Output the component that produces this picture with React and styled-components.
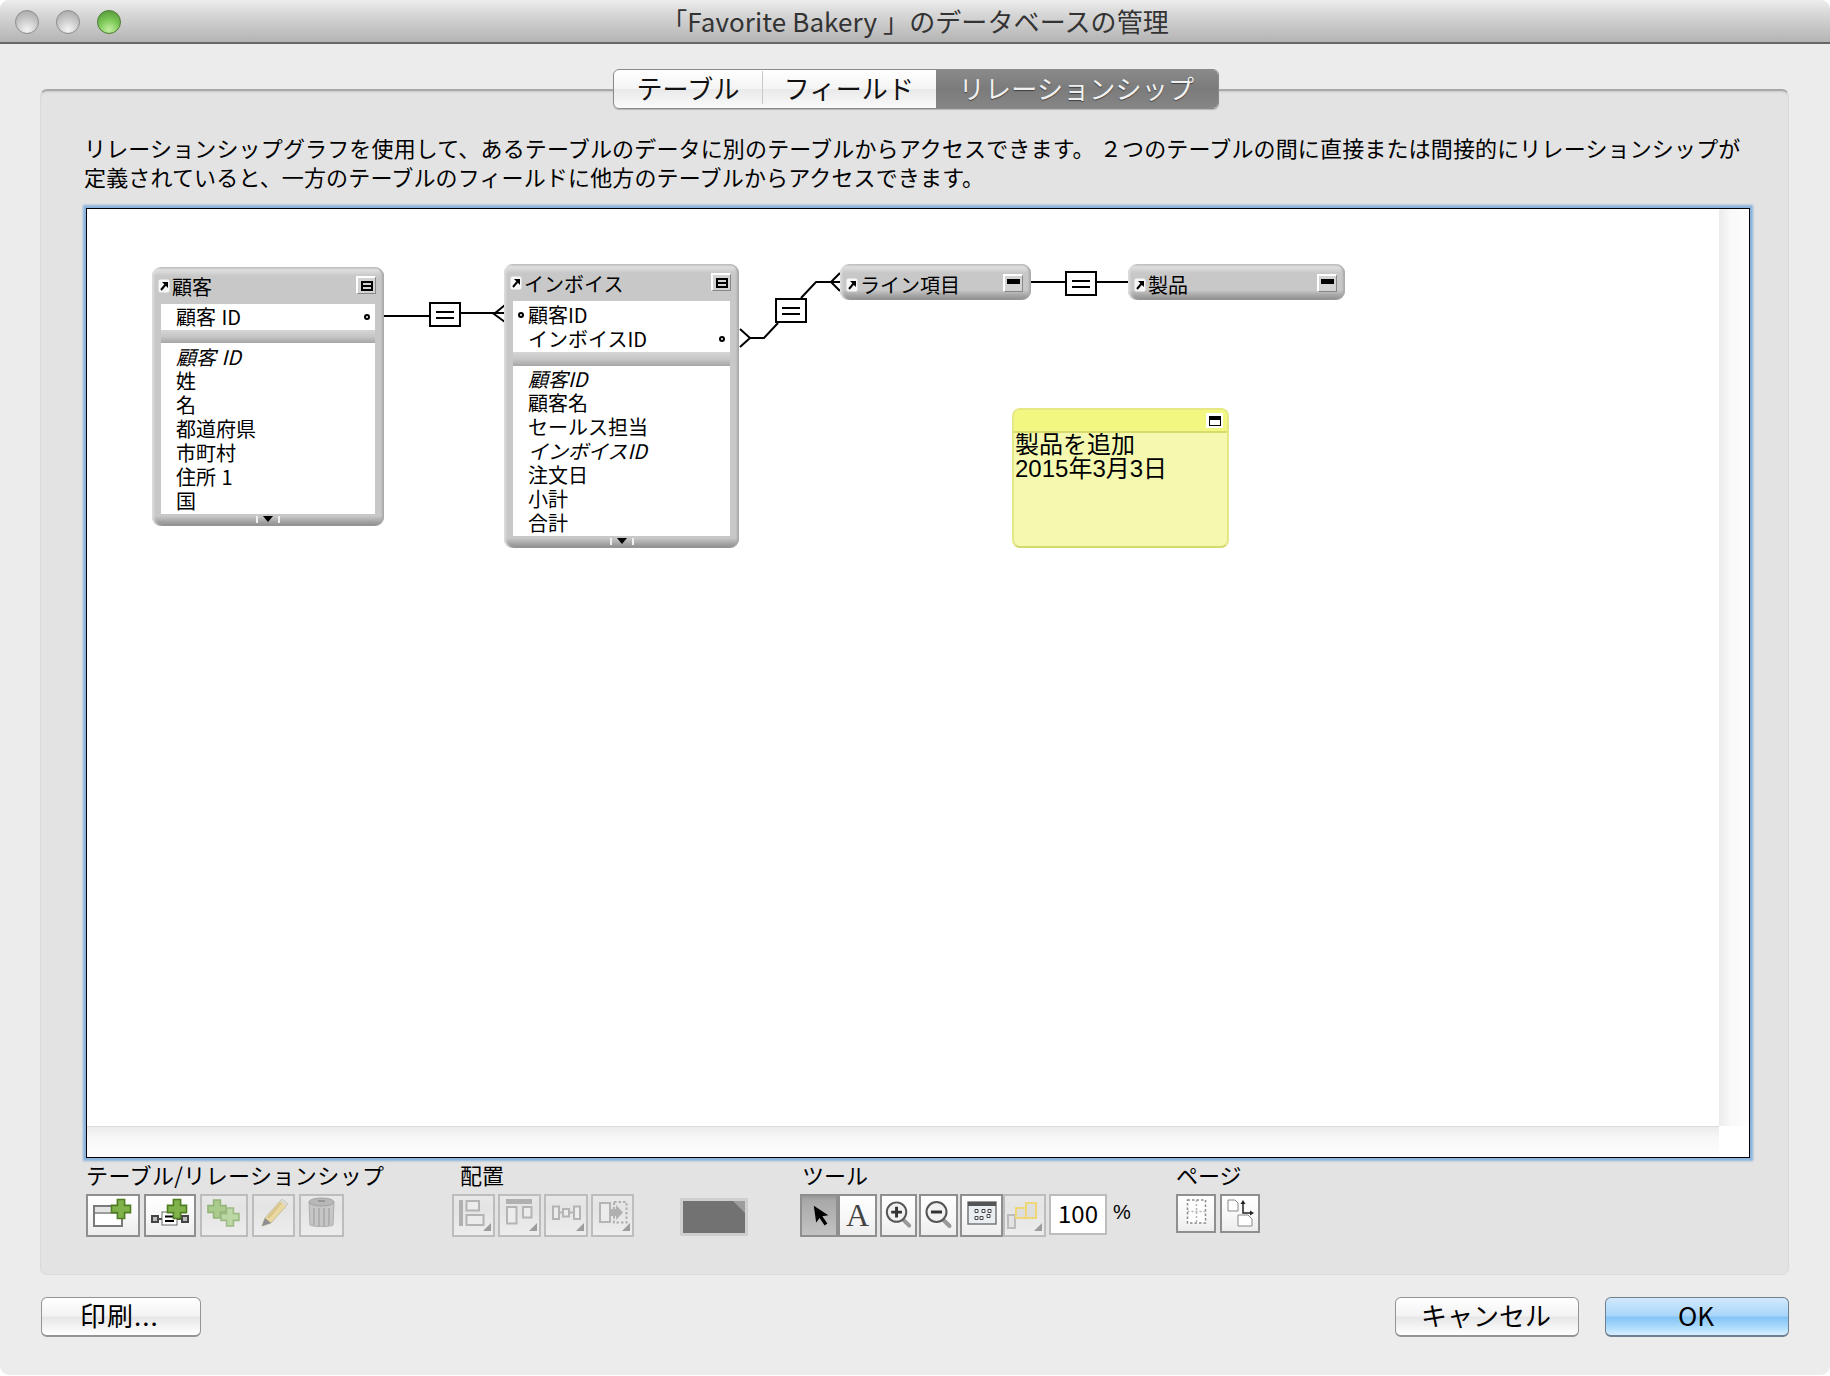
import React from 'react';
import styled, { createGlobalStyle } from 'styled-components';

const UI_FONT = '"Noto Sans CJK JP", "Noto Sans", sans-serif';

const GlobalStyle = createGlobalStyle`
  html, body {
    margin: 0;
    padding: 0;
    background: #fff;
  }
  * {
    box-sizing: border-box;
  }
`;

/* WINDOW */
const Window = styled.div`
  width: 1830px;
  height: 1375px;
  background: #ececec;
  border-radius: 9px;
  overflow: hidden;
  font-family: ${UI_FONT};
  color: #000;
`;

const TitleBar = styled.div`
  position: relative;
  height: 44px;
  display: flex;
  align-items: center;
  justify-content: center;
  background: linear-gradient(#ededed, #d6d6d6 35%, #b4b4b4);
  border-bottom: 2px solid #676767;
`;

const TrafficLights = styled.div`
  position: absolute;
  left: 15px;
  top: 10px;
  display: flex;
  gap: 17px;
`;

const Light = styled.span`
  width: 24px;
  height: 24px;
  border-radius: 50%;
  border: 1px solid ${(p) => (p.$on ? '#4e7d33' : '#8d8d8d')};
  background: ${(p) =>
    p.$on
      ? 'radial-gradient(circle at 50% 85%, #c4efa2 0, #7fca5a 45%, #4c8f33 100%)'
      : 'radial-gradient(circle at 50% 85%, #f4f4f4 0, #c9c9c9 50%, #a2a2a2 100%)'};
`;

const Title = styled.div`
  font-size: 26px;
  letter-spacing: 0.1px;
  color: #333;
  white-space: nowrap;
  padding-bottom: 1px;
`;

const Body = styled.div`
  padding: 0 41px 0 40px;
`;

const TabRow = styled.div`
  position: relative;
  z-index: 1;
  display: flex;
  justify-content: center;
  margin-top: 25px;
  height: 40px;
  padding-left: 2px;
`;

const Tabs = styled.div`
  display: flex;
  height: 40px;
  border-radius: 6px;
  border: 1px solid #8b8b8b;
  overflow: hidden;
  background: linear-gradient(#fff, #f4f4f4 50%, #e9e9e9 50%, #fafafa);
  box-shadow: 0 1px 1px rgba(0, 0, 0, 0.2);
`;

const Tab = styled.div`
  position: relative;
  width: ${(p) => p.$w}px;
  height: 100%;
  display: flex;
  align-items: center;
  justify-content: center;
  font-size: 26px;
  letter-spacing: 0.2px;
  padding-bottom: 3px;
  color: ${(p) => (p.$active ? '#f1f1f1' : '#111')};
  background: ${(p) =>
    p.$active ? 'linear-gradient(#8a8a8a, #7b7b7b 50%, #868686)' : 'none'};
  text-shadow: ${(p) => (p.$active ? '0 1px 1px rgba(0,0,0,.5)' : 'none')};
  &::after {
    content: '';
    display: ${(p) => (p.$divider ? 'block' : 'none')};
    position: absolute;
    right: 0;
    top: 1px;
    bottom: 4px;
    width: 1px;
    background: #c8c8c8;
  }
`;

const Panel = styled.div`
  margin-top: -20px;
  height: 1186px;
  padding: 42px 39px 0 45px;
  background: #e3e3e3;
  border-radius: 7px;
  border: 1px solid #dadada;
  border-top: 2px solid #a8a8a8;
  box-shadow: inset 0 2px 2px -1px #c9c9c9;
`;

const Description = styled.p`
  margin: 0 0 17px -2px;
  font-size: 22px;
  line-height: 29px;
  height: 58px;
  white-space: nowrap;
  letter-spacing: 0.15px;
`;

/* GRAPH */
const Canvas = styled.div`
  width: 1664px;
  height: 950px;
  display: grid;
  grid-template-columns: 1fr 30px;
  grid-template-rows: 1fr 31px;
  background: #fff;
  border: 1px solid #000;
  box-shadow: 0 0 2px 3px #8ab3de;
`;

const Graph = styled.div`
  position: relative;
  overflow: hidden;
  background: #fff;
`;

const VTrack = styled.div`
  background: linear-gradient(90deg, #ececec, #f9f9f9 40%, #fdfdfd);
`;

const HTrack = styled.div`
  background: linear-gradient(#ececec, #f8f8f8 40%, #fdfdfd);
  border-top: 1px solid #dcdcdc;
`;

const ScrollCorner = styled.div`
  background: #fff;
`;

const Connectors = styled.svg`
  position: absolute;
  left: 0;
  top: 0;
  width: 100%;
  height: 100%;
`;

const TableNode = styled.div`
  position: absolute;
  left: ${(p) => p.$x}px;
  top: ${(p) => p.$y}px;
  width: ${(p) => p.$w}px;
  height: ${(p) => p.$h}px;
  display: flex;
  flex-direction: column;
  padding: 0 9px;
  border-radius: 9px;
  background: linear-gradient(#b9b9b9, #dfdfdf 3px, #c8c8c8 9px, #c8c8c8 calc(100% - 10px), #a8a8a8 calc(100% - 5px), #8c8c8c);
  box-shadow: inset 3px 0 2px -1px #dddddd, inset -3px 0 2px -1px #aaaaaa;
`;

const NodeHeader = styled.div`
  position: relative;
  height: ${(p) => (p.$collapsed ? 36 : 37)}px;
  flex: none;
  display: flex;
  align-items: center;
  font-size: 20px;
  padding-top: ${(p) => (p.$collapsed ? 5 : 1)}px;
  margin-left: -3px;
  white-space: nowrap;
`;

const LinkMark = styled.svg`
  width: 12px;
  height: 14px;
  flex: none;
  margin-right: 2px;
`;

const CollapseButton = styled.span`
  position: absolute;
  right: -1px;
  top: ${(p) => (p.$collapsed ? 10 : 9)}px;
  width: 20px;
  height: 18px;
  display: flex;
  justify-content: center;
  align-items: ${(p) => (p.$collapsed ? 'flex-start' : 'center')};
  padding-top: ${(p) => (p.$collapsed ? 3 : 0)}px;
  background: #d3d3d3;
  border-top: 2px solid #fff;
  border-left: 2px solid #fff;
  border-bottom: 1px solid #888;
  border-right: 1px solid #888;
`;

const BoxGlyph = styled.span`
  position: relative;
  width: 12px;
  height: 10px;
  border: 2px solid #000;
  &::after {
    content: '';
    position: absolute;
    left: 0;
    right: 0;
    top: 2px;
    height: 2px;
    background: #000;
  }
`;

const BarGlyph = styled.span`
  width: 13px;
  height: 5px;
  background: #000;
`;

const FieldList = styled.div`
  position: relative;
  height: ${(p) => p.$h}px;
  flex: none;
  padding-top: ${(p) => p.$pad}px;
  background: #fff;
`;

const Divider = styled.div`
  flex: none;
  height: ${(p) => p.$h}px;
  background: linear-gradient(#d6d6d6, #c6c6c6 50%, #a6a6a6);
`;

const FieldRow = styled.div`
  position: relative;
  height: 24px;
  line-height: 24px;
  padding-left: 15px;
  font-size: 20px;
  word-spacing: 1px;
  white-space: nowrap;
  font-style: ${(p) => (p.$italic ? 'italic' : 'normal')};
`;

const KeyDot = styled.span`
  position: absolute;
  top: 9px;
  ${(p) => (p.$left ? 'left: 5px;' : 'right: 5px;')}
  width: 6px;
  height: 6px;
  border: 2px solid #000;
  border-radius: 50%;
  background: #fff;
`;

const NodeFooter = styled.div`
  flex: 1;
  display: flex;
  justify-content: center;
  padding-top: 2px;
`;

const ExpandHandle = styled.span`
  position: relative;
  width: 24px;
  height: 7px;
  border-left: 2px solid #f0f0f0;
  border-right: 2px solid #f0f0f0;
  &::after {
    content: '';
    position: absolute;
    left: 5px;
    top: 0;
    border-left: 5px solid transparent;
    border-right: 5px solid transparent;
    border-top: 6px solid #000;
  }
`;

const RelationBox = styled.div`
  position: absolute;
  left: ${(p) => p.$x}px;
  top: ${(p) => p.$y}px;
  width: 32px;
  height: 25px;
  display: flex;
  align-items: center;
  justify-content: center;
  background: #fff;
  border: 2px solid #000;
`;

const EqualSign = styled.span`
  width: 18px;
  height: 8px;
  border-top: 2px solid #000;
  border-bottom: 2px solid #000;
`;

const Note = styled.div`
  position: absolute;
  left: 925px;
  top: 199px;
  width: 217px;
  height: 140px;
  border-radius: 8px;
  border: 2px solid #e5e884;
  border-bottom-color: #d6da6c;
  background: #f5f9b0;
  overflow: hidden;
`;

const NoteHeader = styled.div`
  position: relative;
  height: 23px;
  background: #f1f781;
  border-bottom: 2px solid #d7db6e;
`;

const NoteClose = styled.span`
  position: absolute;
  right: 4px;
  top: 3px;
  width: 17px;
  height: 15px;
  display: flex;
  align-items: center;
  justify-content: center;
  background: #fff;
`;

const NoteGlyph = styled.span`
  width: 12px;
  height: 10px;
  border: 1.5px solid #000;
  border-top-width: 4px;
`;

const NoteText = styled.div`
  padding-left: 1px;
  font-family: "Liberation Sans", "Noto Sans CJK JP", sans-serif;
  font-size: 24px;
  line-height: 24px;
`;

/* TOOLBAR */
const Toolbar = styled.div`
  display: grid;
  grid-template-columns: 366px 228px 120px 376px auto;
  padding-top: 4px;
`;

const ToolGroup = styled.div`
  display: flex;
  flex-direction: column;
`;

const GroupLabel = styled.div`
  height: 32px;
  line-height: 24px;
  font-size: 22px;
  white-space: nowrap;
  padding-left: ${(p) => p.$indent || 0}px;
  letter-spacing: ${(p) => p.$tracking || 0}px;
`;

const ButtonRow = styled.div`
  display: flex;
  align-items: flex-start;
`;

const ToolButton = styled.div`
  flex: none;
  width: ${(p) => p.$w}px;
  height: ${(p) => p.$h || 43}px;
  margin-left: ${(p) => p.$ml || 0}px;
  display: flex;
  align-items: center;
  justify-content: center;
  color: #444;
  font-family: "Liberation Serif", serif;
  font-size: 32px;
  background: ${(p) =>
    p.$active
      ? 'linear-gradient(#8f8f8f, #a8a8a8 6px, #c4c4c4)'
      : p.$disabled
        ? 'linear-gradient(#e9e9e9, #e4e4e4 30%, #ededed)'
        : 'linear-gradient(#fff, #f8f8f8 50%, #ececec)'};
  box-shadow: inset 0 0 0 2px ${(p) => (p.$disabled ? '#bdbdbd' : '#8f8f8f')};
  svg {
    display: block;
    width: 100%;
    height: 100%;
  }
`;

const ZoomField = styled.div`
  flex: none;
  width: 58px;
  height: 41px;
  margin-left: 3px;
  display: flex;
  align-items: center;
  justify-content: center;
  padding-bottom: 4px;
  background: #fff;
  box-shadow: inset 0 0 0 2px #bcbcbc;
  font-size: 24px;
`;

const Percent = styled.span`
  margin-left: 6px;
  font-family: "Liberation Sans", sans-serif;
  font-size: 20px;
  line-height: 36px;
`;

const Swatch = styled.div`
  position: relative;
  width: 68px;
  height: 38px;
  margin-top: 36px;
  border: 3px solid #cfcfcf;
  background: #727272;
  &::after {
    content: '';
    position: absolute;
    right: 0;
    top: 0;
    border-left: 12px solid transparent;
    border-top: 12px solid #9d9d9d;
  }
`;

/* FOOTER */
const Footer = styled.div`
  display: flex;
  justify-content: space-between;
  margin-top: 22px;
  padding-left: 1px;
`;

const DialogButton = styled.div`
  width: ${(p) => p.$w}px;
  height: 40px;
  display: flex;
  align-items: center;
  justify-content: ${(p) => (p.$left ? 'flex-start' : 'center')};
  padding-left: ${(p) => (p.$left ? 38 : 0)}px;
  padding-right: ${(p) => (p.$left ? 0 : 2)}px;
  padding-bottom: 4px;
  font-size: 26px;
  letter-spacing: ${(p) => (p.$left ? 1 : 0)}px;
  border-radius: 6px;
  border: 1px solid ${(p) => (p.$primary ? '#6e7f90' : '#949494')};
  border-bottom-width: 2px;
  background: ${(p) =>
    p.$primary
      ? 'linear-gradient(#d2e9fc, #a9d5f9 48%, #84c4f6 52%, #a5d8fb 75%, #d4effe)'
      : 'linear-gradient(#fff, #f3f3f3 48%, #e6e6e6 52%, #f5f5f5 80%, #fff)'};
`;

const FooterRight = styled.div`
  display: flex;
  gap: 26px;
`;

/* ICONS */
const ORIGIN = { x: 87, y: 209 };

const Plus = ({ cx, cy, size = 10, arm = 4.5, fill = '#7fb24a', stroke = '#4f7d22' }) => (
  <path
    d={`M${cx - arm} ${cy - size}h${arm * 2}v${size - arm}h${size - arm}v${arm * 2}h-${size - arm}v${size - arm}h-${arm * 2}v-${size - arm}h-${size - arm}v-${arm * 2}h${size - arm}z`}
    fill={fill}
    stroke={stroke}
    strokeWidth="1.6"
  />
);

const NewTableIcon = () => (
  <svg viewBox="0 0 54 43">
    <rect x="8" y="12" width="28" height="20" fill="#fff" stroke="#7a7a7a" strokeWidth="2" />
    <rect x="9" y="13" width="26" height="5" fill="#e4e4e4" />
    <path d="M8 19h28" stroke="#7a7a7a" strokeWidth="1.5" />
    <Plus cx={35} cy={15} size={9.5} arm={3.6} />
  </svg>
);

const NewRelationIcon = () => (
  <svg viewBox="0 0 52 43">
    <path d="M12 25h28" stroke="#111" strokeWidth="1.5" />
    <rect x="8" y="22" width="6" height="6" fill="#bbb" stroke="#444" strokeWidth="2" />
    <rect x="38" y="22" width="6" height="6" fill="#bbb" stroke="#444" strokeWidth="2" />
    <rect x="18" y="18" width="15" height="13" fill="#fff" stroke="#666" />
    <path d="M21 22.5h9M21 27h9" stroke="#000" strokeWidth="2" />
    <Plus cx={33} cy={15} size={9.5} arm={3.6} />
  </svg>
);

const DuplicateIcon = () => (
  <svg viewBox="0 0 48 43">
    <Plus cx={17} cy={15} size={9} arm={3.4} fill="#a9cb8e" stroke="#93b578" />
    <Plus cx={30} cy={23} size={9} arm={3.4} fill="#bcd9a5" stroke="#9dbb84" />
  </svg>
);

const PencilIcon = () => (
  <svg viewBox="0 0 43 43">
    <path d="M13 24l17-19 6 5-17 19-9 3z" fill="#e9d9a0" stroke="#c4bda0" />
    <path d="M28 7l6 5 2-2-6-5z" fill="#d8d8d8" />
    <path d="M10 32l3-8 6 5z" fill="#8e8e8e" />
    <path d="M16 24l13-15" stroke="#d9c488" strokeWidth="2" />
  </svg>
);

const TrashIcon = () => (
  <svg viewBox="0 0 45 43">
    <path d="M10 8l1 23c3 2 20 2 23 0l1-23z" fill="#c6c6c6" stroke="#acacac" />
    <ellipse cx="22.5" cy="8" rx="12.5" ry="4" fill="#b8b8b8" stroke="#a4a4a4" />
    <path d="M19 7h7" stroke="#8d8d8d" strokeWidth="1.5" />
    <path d="M15 14v17M20 14v18M25 14v18M30 14v17" stroke="#a8a8a8" strokeWidth="1.5" />
  </svg>
);

const Corner = ({ w = 43 }) => <path d={`M${w - 4} 29v8h-8z`} fill="#9d9d9d" />;

const AlignLeftIcon = () => (
  <svg viewBox="0 0 43 43">
    <rect x="7" y="6" width="4" height="26" fill="#b0b0b0" />
    <rect x="14.5" y="7" width="12.5" height="9.5" fill="#ececec" stroke="#b4b4b4" strokeWidth="2" />
    <rect x="14.5" y="21" width="17" height="10" fill="#ececec" stroke="#b4b4b4" strokeWidth="2" />
    <Corner />
  </svg>
);

const AlignTopIcon = () => (
  <svg viewBox="0 0 43 43">
    <rect x="8" y="5" width="26" height="5" fill="#b0b0b0" />
    <rect x="9" y="13" width="9.5" height="16.5" fill="#ececec" stroke="#b4b4b4" strokeWidth="2" />
    <rect x="25" y="13" width="8.5" height="10.5" fill="#ececec" stroke="#b4b4b4" strokeWidth="2" />
    <Corner />
  </svg>
);

const DistributeIcon = () => (
  <svg viewBox="0 0 44 43">
    <path d="M14 18.5h16" stroke="#b4b4b4" strokeWidth="2" />
    <rect x="9" y="12.5" width="6" height="12.5" fill="#ececec" stroke="#b4b4b4" strokeWidth="2" />
    <rect x="19" y="15" width="6" height="7.5" fill="#ececec" stroke="#b4b4b4" strokeWidth="2" />
    <rect x="30" y="12.5" width="6" height="12.5" fill="#ececec" stroke="#b4b4b4" strokeWidth="2" />
    <Corner w={44} />
  </svg>
);

const ResizeIcon = () => (
  <svg viewBox="0 0 43 43">
    <rect x="23" y="8" width="12.5" height="20.5" fill="none" stroke="#b0b0b0" strokeWidth="2" strokeDasharray="2.5 2" />
    <rect x="9" y="9" width="10" height="19" fill="#ececec" stroke="#b4b4b4" strokeWidth="2" />
    <path d="M19 15h6v-4l7 7.5-7 7.5v-4h-6z" fill="#b0b0b0" />
    <Corner />
  </svg>
);

const PointerIcon = () => (
  <svg viewBox="0 0 38 43">
    <path d="M15 11v17l4-4 4 8 3-1.5-4-8h6z" fill="#000" transform="rotate(-8 20 20)" />
  </svg>
);

const ZoomIcon = ({ minus }) => (
  <svg viewBox="0 0 38 43">
    <path d="M23 25l7 7" stroke="#999" strokeWidth="4" strokeLinecap="round" />
    <circle cx="17" cy="18" r="10" fill="#f1f1f1" stroke="#555" strokeWidth="2" />
    <path d={minus ? 'M11.5 18h11' : 'M11.5 18h11M17 12.5v11'} stroke="#333" strokeWidth="3" />
  </svg>
);

const ModeIcon = () => (
  <svg viewBox="0 0 43 43">
    <rect x="8" y="8" width="28" height="22" fill="#e9eef3" stroke="#777" strokeWidth="1.5" />
    <rect x="8" y="8" width="28" height="4" fill="#555" />
    <path d="M15 15.5h3v3h-3zM22 15.5h3v3h-3zM28 15.5h3v3h-3zM15 22.5h3v3h-3zM20 22.5h3v3h-3zM27 20.5h3v3h-3z" fill="#fff" stroke="#444" />
  </svg>
);

const ArrangeIcon = () => (
  <svg viewBox="0 0 43 43">
    <rect x="5" y="21" width="7" height="13" fill="#e3e3e3" stroke="#bcbcbc" strokeWidth="2" />
    <rect x="13" y="14" width="10" height="10" fill="#dedede" stroke="#efd777" strokeWidth="2" />
    <rect x="23" y="9" width="10" height="15" fill="#dedede" stroke="#efd777" strokeWidth="2" />
    <Corner />
  </svg>
);

const PageGridIcon = () => (
  <svg viewBox="0 0 40 39">
    <rect x="11.5" y="6" width="18" height="23" fill="#fff" stroke="#8b8b8b" strokeWidth="1.5" strokeDasharray="2.5 2" />
    <path d="M20.5 6v23M11.5 17.5h18" stroke="#b4b4b4" strokeWidth="1.5" strokeDasharray="2 2" />
  </svg>
);

const PageSetupIcon = () => (
  <svg viewBox="0 0 40 39">
    <path d="M8 6h7l3 3v8H8z" fill="#fff" stroke="#888" />
    <path d="M18 21h10l4 4v7H18z" fill="#fff" stroke="#888" />
    <path d="M23 10v9h8" fill="none" stroke="#222" strokeWidth="1.5" />
    <path d="M23 6l-2.5 4h5zM34 19l-4-2.5v5z" fill="#222" />
  </svg>
);

const LinkIcon = () => (
  <LinkMark viewBox="0 0 12 14">
    <rect x="0.5" y="0.5" width="11" height="13" rx="2" fill="#fff" opacity="0.85" />
    <path d="M3 11l5-6" stroke="#000" strokeWidth="2" />
    <path d="M4 3h6v6z" fill="#000" />
  </LinkMark>
);

/* DATA */
const customerFields = ['顧客 ID', '姓', '名', '都道府県', '市町村', '住所 1', '国'];
const invoiceFields = ['顧客ID', '顧客名', 'セールス担当', 'インボイスID', '注文日', '小計', '合計'];

const toLocal = (points) =>
  points.map(([x, y]) => `${x - ORIGIN.x},${y - ORIGIN.y}`).join(' ');

const connectorLines = [
  [[383, 316], [429, 316]],
  [[461, 313], [505, 313]],
  [[505, 305], [494, 314], [505, 322]],
  [[740, 329], [750, 338], [740, 347]],
  [[750, 338], [764, 338], [778, 323]],
  [[801, 298], [816, 282], [840, 282]],
  [[840, 273], [831, 282], [840, 291]],
  [[1031, 282], [1065, 282]],
  [[1097, 282], [1129, 282]],
];

const NodeTitle = ({ name, collapsed }) => (
  <NodeHeader $collapsed={collapsed}>
    <LinkIcon />
    {name}
    <CollapseButton $collapsed={collapsed}>
      {collapsed ? <BarGlyph /> : <BoxGlyph />}
    </CollapseButton>
  </NodeHeader>
);

const App = () => (
  <>
    <GlobalStyle />
    <Window>
      <TitleBar>
        <TrafficLights>
          <Light />
          <Light />
          <Light $on />
        </TrafficLights>
        <Title>「Favorite Bakery 」のデータベースの管理</Title>
      </TitleBar>
      <Body>
        <TabRow>
          <Tabs>
            <Tab $w={149} $divider>テーブル</Tab>
            <Tab $w={173}>フィールド</Tab>
            <Tab $w={282} $active>リレーションシップ</Tab>
          </Tabs>
        </TabRow>
        <Panel>
          <Description>
            リレーションシップグラフを使用して、あるテーブルのデータに別のテーブルからアクセスできます。 ２つのテーブルの間に直接または間接的にリレーションシップが
            <br />
            定義されていると、一方のテーブルのフィールドに他方のテーブルからアクセスできます。
          </Description>
          <Canvas>
            <Graph>
              <Connectors>
                {connectorLines.map((points) => (
                  <polyline
                    key={points.join('-')}
                    points={toLocal(points)}
                    fill="none"
                    stroke="#000"
                    strokeWidth="2"
                  />
                ))}
              </Connectors>
              <TableNode $x={65} $y={58} $w={232} $h={259}>
                <NodeTitle name="顧客" />
                <FieldList $h={26} $pad={1}>
                  <FieldRow>
                    顧客 ID
                    <KeyDot />
                  </FieldRow>
                </FieldList>
                <Divider $h={13} />
                <FieldList $h={171} $pad={2}>
                  {customerFields.map((field, index) => (
                    <FieldRow key={field} $italic={index === 0}>
                      {field}
                    </FieldRow>
                  ))}
                </FieldList>
                <NodeFooter>
                  <ExpandHandle />
                </NodeFooter>
              </TableNode>
              <TableNode $x={417} $y={55} $w={235} $h={284}>
                <NodeTitle name="インボイス" />
                <FieldList $h={51} $pad={2}>
                  <FieldRow>
                    <KeyDot $left />
                    顧客ID
                  </FieldRow>
                  <FieldRow>
                    インボイスID
                    <KeyDot />
                  </FieldRow>
                </FieldList>
                <Divider $h={14} />
                <FieldList $h={170} $pad={1}>
                  {invoiceFields.map((field, index) => (
                    <FieldRow key={field} $italic={index === 0 || index === 3}>
                      {field}
                    </FieldRow>
                  ))}
                </FieldList>
                <NodeFooter>
                  <ExpandHandle />
                </NodeFooter>
              </TableNode>
              <TableNode $x={753} $y={55} $w={191} $h={36}>
                <NodeTitle name="ライン項目" collapsed />
              </TableNode>
              <TableNode $x={1041} $y={55} $w={217} $h={36}>
                <NodeTitle name="製品" collapsed />
              </TableNode>
              <RelationBox $x={342} $y={93}>
                <EqualSign />
              </RelationBox>
              <RelationBox $x={688} $y={89}>
                <EqualSign />
              </RelationBox>
              <RelationBox $x={978} $y={62}>
                <EqualSign />
              </RelationBox>
              <Note>
                <NoteHeader>
                  <NoteClose>
                    <NoteGlyph />
                  </NoteClose>
                </NoteHeader>
                <NoteText>
                  製品を追加
                  <br />
                  2015年3月3日
                </NoteText>
              </Note>
            </Graph>
            <VTrack />
            <HTrack />
            <ScrollCorner />
          </Canvas>
          <Toolbar>
            <ToolGroup>
              <GroupLabel $tracking={0.4}>テーブル/リレーションシップ</GroupLabel>
              <ButtonRow>
                <ToolButton $w={54}><NewTableIcon /></ToolButton>
                <ToolButton $w={52} $ml={4}><NewRelationIcon /></ToolButton>
                <ToolButton $w={48} $ml={4} $disabled><DuplicateIcon /></ToolButton>
                <ToolButton $w={43} $ml={4} $disabled><PencilIcon /></ToolButton>
                <ToolButton $w={45} $ml={4} $disabled><TrashIcon /></ToolButton>
              </ButtonRow>
            </ToolGroup>
            <ToolGroup>
              <GroupLabel $indent={8}>配置</GroupLabel>
              <ButtonRow>
                <ToolButton $w={43} $disabled><AlignLeftIcon /></ToolButton>
                <ToolButton $w={43} $ml={3} $disabled><AlignTopIcon /></ToolButton>
                <ToolButton $w={44} $ml={3} $disabled><DistributeIcon /></ToolButton>
                <ToolButton $w={43} $ml={3} $disabled><ResizeIcon /></ToolButton>
              </ButtonRow>
            </ToolGroup>
            <ToolGroup>
              <Swatch />
            </ToolGroup>
            <ToolGroup>
              <GroupLabel $indent={2}>ツール</GroupLabel>
              <ButtonRow>
                <ToolButton $w={38} $active><PointerIcon /></ToolButton>
                <ToolButton $w={39}>A</ToolButton>
                <ToolButton $w={37} $ml={3}><ZoomIcon /></ToolButton>
                <ToolButton $w={39} $ml={2}><ZoomIcon minus /></ToolButton>
                <ToolButton $w={43} $ml={2}><ModeIcon /></ToolButton>
                <ToolButton $w={43} $disabled><ArrangeIcon /></ToolButton>
                <ZoomField>100</ZoomField>
                <Percent>%</Percent>
              </ButtonRow>
            </ToolGroup>
            <ToolGroup>
              <GroupLabel>ページ</GroupLabel>
              <ButtonRow>
                <ToolButton $w={40} $h={39}><PageGridIcon /></ToolButton>
                <ToolButton $w={40} $h={39} $ml={4}><PageSetupIcon /></ToolButton>
              </ButtonRow>
            </ToolGroup>
          </Toolbar>
        </Panel>
        <Footer>
          <DialogButton $w={160} $left>印刷...</DialogButton>
          <FooterRight>
            <DialogButton $w={184}>キャンセル</DialogButton>
            <DialogButton $w={184} $primary>OK</DialogButton>
          </FooterRight>
        </Footer>
      </Body>
    </Window>
  </>
);

export default App;
